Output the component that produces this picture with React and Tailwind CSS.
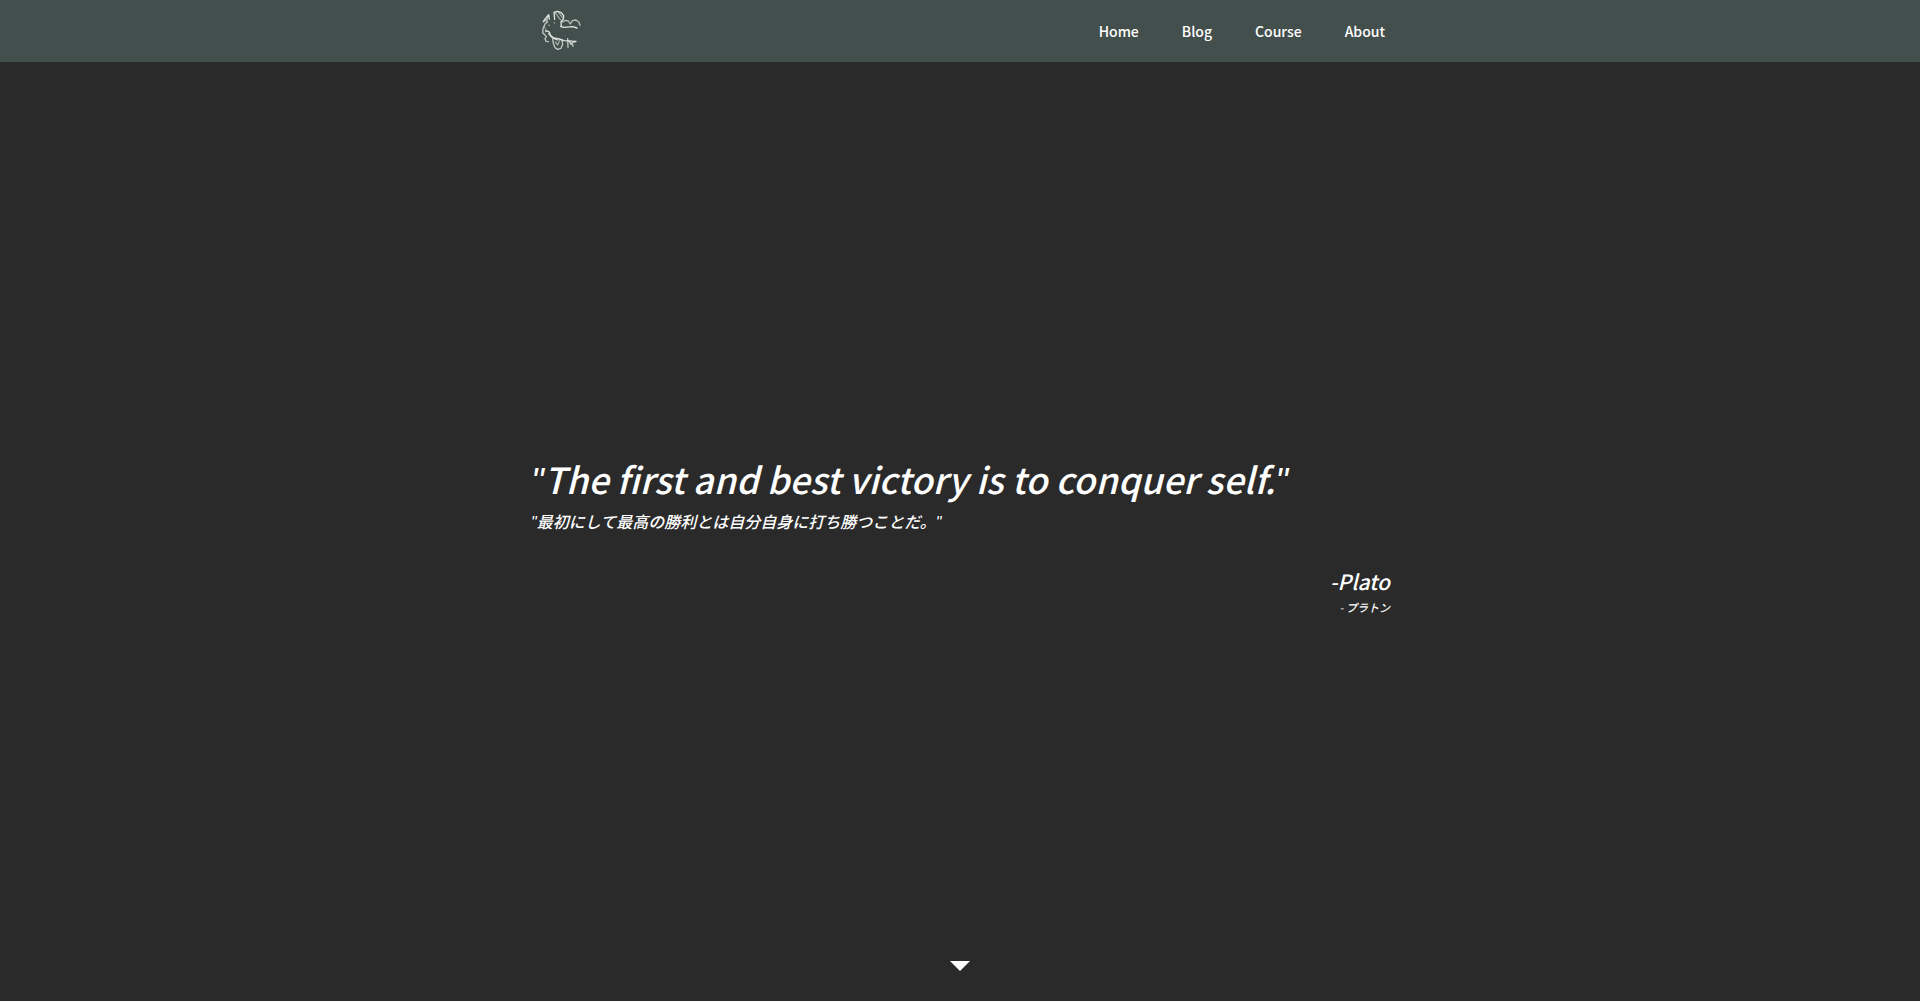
const links = ["Home", "Blog", "Course", "About"];

function Logo() {
  return (
    <svg width="42" height="42" viewBox="60 24 126 126" fill="none" stroke="#dfe3e1" strokeWidth="4" strokeLinecap="round" strokeLinejoin="round" aria-hidden="true">
      <path d="M70 65L76 56L86 44L88 57" />
      <path d="M71 65L76 60L83 58M84 50L79 64" strokeOpacity=".7" />
      <path d="M83 65L75 72L69 86L68 98L74 104L79 110L75 117L78 124L85 125" strokeOpacity=".8" />
      <path d="M73 80L77 88L76 96L82 94" strokeOpacity=".6" strokeWidth="3" />
      <path d="M104 58L102 37L112 34L124 38L131 47L130 57L123 66L124 79" />
      <path d="M105 37L121 59M114 34L127 52" strokeOpacity=".6" />
      <path d="M122 80L132 82L158 80L171 84" />
      <path d="M128 66L136 61L145 63L151 72L157 62L168 60L177 67L180 76" strokeOpacity=".75" />
      <path d="M79 92L88 96L91 106L101 114L118 117L132 122L167 124" />
      <path d="M86 101L98 114L112 120" />
      <path d="M98 118L100 130L105 143L113 148L123 145L128 133L126 120" strokeOpacity=".8" />
      <path d="M106 126L113 135L119 121" strokeOpacity=".6" />
      <path d="M143 116L144 142M147 123L152 132L158 134L159 139M168 124L154 130L148 124" strokeOpacity=".8" />
      <path d="M87 75V77M103 68V69" strokeOpacity=".6" />
    </svg>
  );
}

function Quote({ children }) {
  return (
    <>
      <span className="font-['Liberation_Sans']">"</span>
      {children}
      <span className="font-['Liberation_Sans']">"</span>
    </>
  );
}

export default function App() {
  return (
    <div lang="ja" className="flex h-screen flex-col bg-[#2a2a2a] font-['Noto_Sans_CJK_JP',sans-serif] font-medium text-white">
      <header className="bg-[#434f4c]">
        <div className="mx-auto flex h-[62px] max-w-[860px] items-center justify-between pr-[5px] pl-[10px]">
          <a href="#home" aria-label="Top page" className="pb-1">
            <Logo />
          </a>
          <nav className="flex gap-[43px] text-sm">
            {links.map((name) => (
              <a key={name} href={"#" + name.toLowerCase()}>{name}</a>
            ))}
          </nav>
        </div>
      </header>
      <main className="flex grow flex-col">
        <figure className="mx-auto flex w-full max-w-[860px] grow flex-col justify-center pt-[42px] italic">
          <blockquote className="pl-px">
            <p className="text-4xl leading-[54px]"><Quote>The first and best victory is to conquer self.</Quote></p>
            <p className="text-base"><Quote>最初にして最高の勝利とは自分自身に打ち勝つことだ。</Quote></p>
          </blockquote>
          <figcaption className="mt-7 text-right">
            <p className="text-[21px] leading-9">-Plato</p>
            <p className="text-[11px] leading-4">- プラトン</p>
          </figcaption>
        </figure>
        <a href="#next" aria-label="Scroll down" className="mx-auto mb-[30px]">
          <svg width="20" height="10" viewBox="0 0 20 10" fill="white" aria-hidden="true">
            <path d="M0 0H20L10 10Z" />
          </svg>
        </a>
      </main>
    </div>
  );
}
